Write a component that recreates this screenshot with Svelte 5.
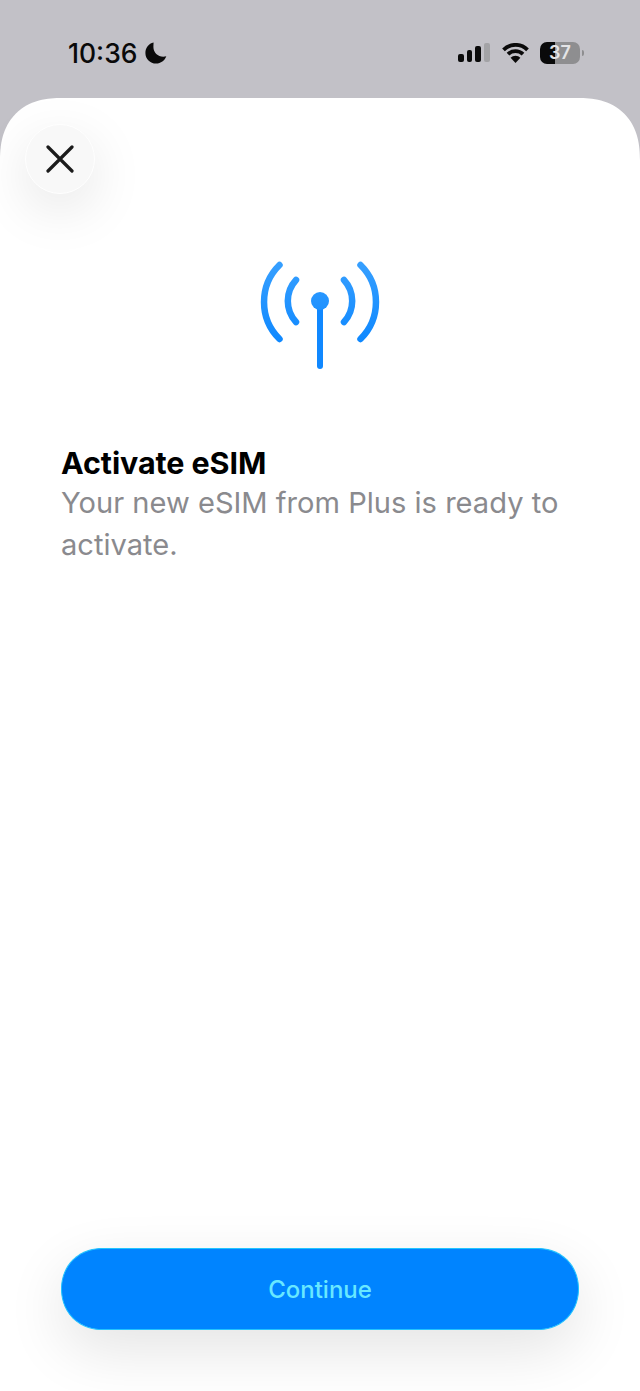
<script>
  const bars = [
    { h: 8, off: false },
    { h: 12, off: false },
    { h: 16, off: false },
    { h: 19, off: true }
  ];
</script>

<div class="page">
  <header class="status">
    <div class="left">
      <span class="time">10:36</span>
      <svg class="moon" viewBox="0 0 22 22" aria-hidden="true">
        <path d="M8.600 0.600C3.600 1.700 0.400 5.900 0.400 11c0 5.900 4.800 10.600 10.700 10.600 4.700 0 8.700-3 10.200-7.300-0.900 0.300-1.900 0.500-3 0.500-5.500 0-9.900-4.300-9.900-9.700 0-1.600 0.100-3 0.200-4.500z" />
      </svg>
    </div>
    <div class="right">
      <div class="signal">
        {#each bars as b}
          <span class="bar" class:off={b.off} style="height:{b.h}px"></span>
        {/each}
      </div>
      <svg class="wifi" viewBox="0 0 27 20" aria-hidden="true">
        <path d="M1.500 6.800A17 17 0 0 1 25.500 6.800" />
        <path d="M6 11.200A10.800 10.800 0 0 1 21 11.200" />
        <path class="tip" d="M13.500 20L8.600 14.800A6.800 6.800 0 0 1 18.400 14.800z" />
      </svg>
      <div class="battery"><span>37</span></div>
      <span class="nub"></span>
    </div>
  </header>

  <main class="sheet">
    <button class="close" aria-label="Close">
      <svg viewBox="0 0 28 28" aria-hidden="true">
        <path d="M2 2L26 26M26 2L2 26" />
      </svg>
    </button>

    <div class="hero">
      <svg viewBox="0 0 120 110" aria-hidden="true">
        <defs>
          <linearGradient id="blue" gradientUnits="userSpaceOnUse" x1="0" y1="0" x2="0" y2="110">
            <stop offset="0" stop-color="#38a0ff" />
            <stop offset="1" stop-color="#0080ff" />
          </linearGradient>
        </defs>
        <g class="waves">
          <path d="M19.500 5A52 52 0 0 0 19.500 79" />
          <path d="M36 20A31 31 0 0 0 36 62" />
          <path d="M100.500 5A52 52 0 0 1 100.500 79" />
          <path d="M84 20A31 31 0 0 1 84 62" />
          <path d="M60 41V106" />
        </g>
        <circle cx="60" cy="41" r="9" fill="url(#blue)" />
      </svg>
    </div>

    <section class="copy">
      <h1>Activate eSIM</h1>
      <p>Your new eSIM from Plus is ready to activate.</p>
    </section>

    <button class="continue">Continue</button>
  </main>
</div>

<style>
  :global(body) {
    margin: 0;
    background: #c2c1c7;
  }

  .page {
    height: 1391px;
    display: flex;
    flex-direction: column;
    overflow: hidden;
    font-family: Inter, "Liberation Sans", sans-serif;
    background: #c2c1c7;
  }

  .status {
    height: 98px;
    flex: none;
    display: flex;
    justify-content: space-between;
    align-items: center;
    padding: 7px 56px 0 68px;
    box-sizing: border-box;
  }

  .left {
    display: flex;
    align-items: center;
    gap: 8px;
  }

  .time {
    font-size: 26.500px;
    font-weight: 550;
    color: #0a0a0a;
  }

  .moon {
    width: 22px;
    height: 22px;
    fill: #0a0a0a;
  }

  .right {
    display: flex;
    align-items: center;
  }

  .signal {
    display: flex;
    align-items: flex-end;
    gap: 3px;
    height: 19px;
    margin-right: 12px;
  }

  .bar {
    width: 5.800px;
    border-radius: 2px;
    background: #0a0a0a;
  }

  .bar.off {
    background: #a3a3a6;
  }

  .wifi {
    width: 27px;
    height: 20px;
    margin-right: 11px;
    fill: none;
    stroke: #0a0a0a;
    stroke-width: 3.800;
  }

  .wifi .tip {
    fill: #0a0a0a;
    stroke: none;
  }

  .battery {
    width: 40px;
    height: 22px;
    border-radius: 7px;
    background: linear-gradient(90deg, #0a0a0a 0 15px, #8e8e90 15px);
    display: flex;
    align-items: center;
    justify-content: center;
    font-size: 18px;
    font-weight: 600;
    color: #e4e4e6;
  }

  .nub {
    width: 2px;
    height: 6px;
    margin-left: 2px;
    border-radius: 0 2px 2px 0;
    background: #8e8e90;
  }

  .sheet {
    flex: 1;
    display: flex;
    flex-direction: column;
    align-items: flex-start;
    background: #fff;
    border-radius: 62px 62px 0 0;
    corner-shape: superellipse(1.25);
    padding: 26px 61px 61px;
    box-sizing: border-box;
  }

  .close {
    width: 70px;
    height: 70px;
    margin-left: -36px;
    padding: 0;
    display: flex;
    align-items: center;
    justify-content: center;
    border: 1px solid #fff;
    border-radius: 50%;
    background: #f8f8f8;
    box-shadow: 0 16px 54px rgba(0, 0, 0, 0.1);
  }

  .close svg {
    width: 28px;
    height: 28px;
    fill: none;
    stroke: #1b1b1b;
    stroke-width: 3.200;
    stroke-linecap: round;
  }

  .hero {
    align-self: center;
    margin-top: 66px;
    height: 110px;
    width: 120px;
  }

  .hero svg {
    display: block;
    width: 120px;
    height: 110px;
  }

  .waves path {
    fill: none;
    stroke: url(#blue);
    stroke-width: 6.500;
    stroke-linecap: round;
  }

  .waves path:last-child {
    stroke: #1088ff;
    stroke-width: 6;
  }

  .copy {
    margin-top: 72px;
  }

  h1 {
    margin: 0;
    font-size: 30.500px;
    line-height: 42px;
    font-weight: 700;
    color: #000;
    letter-spacing: -0.100px;
  }

  p {
    margin: -2px 0 0;
    font-size: 29.100px;
    line-height: 42px;
    font-weight: 400;
    color: #8a8a8e;
    width: 518px;
  }

  .continue {
    margin-top: auto;
    width: 518px;
    height: 82px;
    padding: 0;
    border: 1px solid #22c4ff;
    border-radius: 41px;
    corner-shape: superellipse(1.06);
    background: #0084ff;
    font-family: inherit;
    font-size: 24px;
    font-weight: 500;
    color: #68e8ff;
    box-shadow: 0 20px 60px rgba(0, 0, 0, 0.11);
  }
</style>
